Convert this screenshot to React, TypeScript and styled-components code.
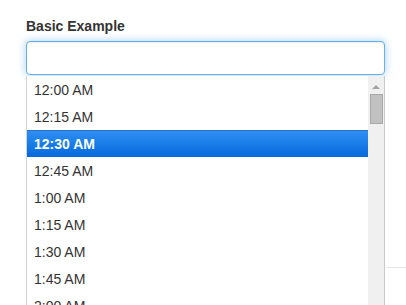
import React from "react";
import styled, { createGlobalStyle } from "styled-components";

const Global = createGlobalStyle`
  html, body { margin: 0; padding: 0; background: #fff; overflow: hidden; }
  body { font-family: "Liberation Sans", Arial, Helvetica, sans-serif; font-size: 14px; color: #333; }
`;

const Page = styled.div`
  position: relative;
  width: 406px;
  height: 305px;
  overflow: hidden;
  padding: 16px 0 0 26px;
  box-sizing: border-box;
`;

const Field = styled.div`
  width: 359px;
  display: flex;
  flex-direction: column;
`;

const Label = styled.label`
  display: block;
  font-weight: bold;
  font-size: 14px;
  line-height: 20px;
  color: #333;
  margin-bottom: 5px;
`;

const Input = styled.input`
  box-sizing: border-box;
  width: 100%;
  height: 34px;
  margin: 0;
  padding: 6px 12px;
  font: inherit;
  border: 1px solid #66afe9;
  border-radius: 4px;
  outline: none;
  box-shadow: inset 0 1px 1px rgba(0, 0, 0, 0.075), 0 0 8px rgba(102, 175, 233, 0.6);
`;

const Dropdown = styled.div`
  display: flex;
  height: 240px;
  border-left: 1px solid #d4d4d4;
  border-right: 1px solid #c9c9c9;
  background: #fff;
  margin-top: 1px;
`;

const List = styled.ul`
  flex: 1;
  list-style: none;
  margin: 0;
  padding: 0;
  overflow: hidden;
`;

const Item = styled.li<{ $selected?: boolean }>`
  box-sizing: border-box;
  height: 27px;
  padding: 4px 0 3px 7px;
  line-height: 20px;
  font-size: 14px;
  white-space: nowrap;
  color: ${(p) => (p.$selected ? "#fff" : "#333")};
  font-weight: ${(p) => (p.$selected ? "bold" : "normal")};
  background: ${(p) =>
    p.$selected ? "linear-gradient(to bottom, #2d8ff2 0%, #1a7ce8 50%, #0568dc 100%)" : "transparent"};
  border-top: ${(p) => (p.$selected ? "1px solid #2b72c6" : "none")};
  padding-top: ${(p) => (p.$selected ? "3px" : "4px")};
`;

const Scrollbar = styled.div`
  width: 16px;
  background: #f0f0f0;
  display: flex;
  flex-direction: column;
  align-items: center;
`;

const ArrowUp = styled.div`
  margin-top: 9px;
  width: 0;
  height: 0;
  border-left: 4px solid transparent;
  border-right: 4px solid transparent;
  border-bottom: 4px solid #a3a3a3;
`;

const Thumb = styled.div`
  margin-top: 5px;
  width: 11px;
  height: 28px;
  background: #c1c1c1;
  border: 1px solid #a9a9a9;
`;

const Rule = styled.div`
  position: absolute;
  left: 386px;
  top: 267px;
  width: 20px;
  height: 1px;
  background: #e6e6e6;
`;

const times = [
  "12:00 AM",
  "12:15 AM",
  "12:30 AM",
  "12:45 AM",
  "1:00 AM",
  "1:15 AM",
  "1:30 AM",
  "1:45 AM",
  "2:00 AM",
  "2:15 AM",
];

export default function App() {
  return (
    <>
      <Global />
      <Page>
        <Field>
          <Label>Basic Example</Label>
          <Input type="text" />
          <Dropdown>
            <List>
              {times.map((t) => (
                <Item key={t} $selected={t === "12:30 AM"}>
                  {t}
                </Item>
              ))}
            </List>
            <Scrollbar>
              <ArrowUp />
              <Thumb />
            </Scrollbar>
          </Dropdown>
        </Field>
        <Rule />
      </Page>
    </>
  );
}
